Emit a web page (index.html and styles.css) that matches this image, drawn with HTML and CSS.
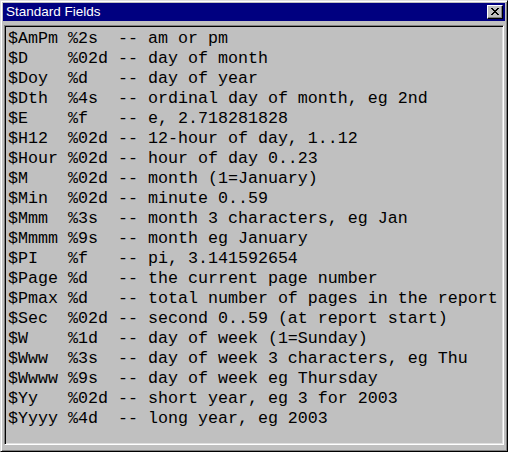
FILE: index.html
```html
<!DOCTYPE html>
<html>
<head>
<meta charset="utf-8">
<link rel="stylesheet" href="styles.css">
</head>
<body>
<div class="window">
  <div class="titlebar">
    <span class="title">Standard Fields</span>
    <span class="close"><svg width="8" height="7" viewBox="0 0 8 7"><path d="M0 0h2v1h1v1h2v-1h1v-1h2v1h-1v1h-1v1h-1v1h1v1h1v1h1v1h-2v-1h-1v-1h-2v1h-1v1h-2v-1h1v-1h1v-1h1v-1h-1v-1h-1v-1h-1z" fill="#000"/></svg></span>
  </div>
  <div class="content">
<pre class="fields">$AmPm %2s  -- am or pm
$D    %02d -- day of month
$Doy  %d   -- day of year
$Dth  %4s  -- ordinal day of month, eg 2nd
$E    %f   -- e, 2.718281828
$H12  %02d -- 12-hour of day, 1..12
$Hour %02d -- hour of day 0..23
$M    %02d -- month (1=January)
$Min  %02d -- minute 0..59
$Mmm  %3s  -- month 3 characters, eg Jan
$Mmmm %9s  -- month eg January
$PI   %f   -- pi, 3.141592654
$Page %d   -- the current page number
$Pmax %d   -- total number of pages in the report
$Sec  %02d -- second 0..59 (at report start)
$W    %1d  -- day of week (1=Sunday)
$Www  %3s  -- day of week 3 characters, eg Thu
$Wwww %9s  -- day of week eg Thursday
$Yy   %02d -- short year, eg 3 for 2003
$Yyyy %4d  -- long year, eg 2003</pre>
  </div>
</div>
</body>
</html>
```
FILE: styles.css
```css
html, body {
  margin: 0;
  padding: 0;
  background: #c0c0c0;
}
.window {
  width: 508px;
  height: 452px;
  box-sizing: border-box;
  border: 1px solid;
  border-color: #dfdfdf #000 #000 #dfdfdf;
  box-shadow: inset 1px 1px #fff, inset -1px -1px #808080;
  padding: 2px;
  background: #c0c0c0;
  display: flex;
  flex-direction: column;
}
.titlebar {
  height: 18px;
  background: #000080;
  display: flex;
  align-items: center;
  justify-content: space-between;
  padding: 0 2px 0 3px;
  flex: none;
}
.title {
  color: #fff;
  font-family: "Liberation Sans", Arial, sans-serif;
  font-size: 13.5px;
  line-height: 18px;
}
.close {
  width: 16px;
  height: 14px;
  box-sizing: border-box;
  background: #c0c0c0;
  border: 1px solid;
  border-color: #fff #000 #000 #fff;
  box-shadow: inset -1px -1px #808080;
  display: flex;
  align-items: center;
  justify-content: center;
  padding: 0 1px 1px 0;
}
.close svg {
  display: block;
}
.content {
  flex: 1;
  margin: 4px 1px 4px 1px;
  border: 1px solid;
  border-color: #808080 #fff #fff #808080;
  box-shadow: inset 1px 1px #000, inset -1px -1px #dfdfdf;
  padding: 3px 2px 2px 3px;
  overflow: hidden;
}
.fields {
  margin: 0;
  font-family: "Liberation Mono", "Courier New", monospace;
  font-size: 16.67px;
  line-height: 20px;
  color: #000;
}
```
